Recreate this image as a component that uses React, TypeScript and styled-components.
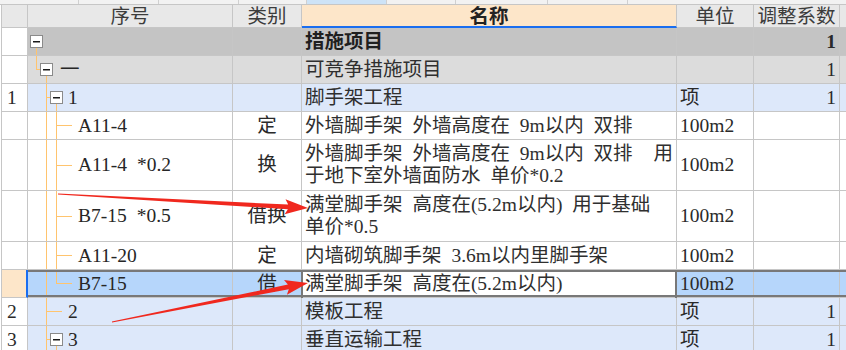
import React from 'react';
import styled, { createGlobalStyle, css } from 'styled-components';

const GRID = '#c6c6c6';
const ORANGE = '#ffc46e';
const BLUE = '#1a6ef0';
const COLS = '27px 205px 69px 375px 77px 86px 1fr';

type Tone = 'head' | 'root' | 'group' | 'sub' | 'item' | 'sel';
const toneBg: Record<Tone, string> = {
  head: '#e8e8e8',
  root: '#c4c4c4',
  group: '#dcdcdc',
  sub: '#dde8fa',
  item: '#ffffff',
  sel: '#b6d6fb',
};

const GlobalStyle = createGlobalStyle`
  html, body { margin: 0; padding: 0; background: #fff; overflow: hidden; }
  body {
    font-family: "Liberation Serif", "Noto Sans CJK SC", serif;
    font-size: 19.5px;
    word-spacing: 5px;
    color: #2a2a2a;
  }
`;

const Page = styled.div`
  position: relative;
  width: 846px;
  height: 350px;
  overflow: hidden;
  background: #fff;
`;

const TopStrip = styled.div`
  display: flex;
  height: 4px;
  border-bottom: 1px solid ${GRID};
  background: #f2f2f2;
`;

const StripSeg = styled.div<{ $w?: number; $active?: boolean }>`
  box-sizing: border-box;
  flex: ${(p) => (p.$w ? `0 0 ${p.$w}px` : '1 1 auto')};
  border-right: ${(p) => (p.$w ? '1px solid #d0d0d0' : 'none')};
  background: ${(p) => (p.$active ? '#cde3f7' : 'transparent')};
`;

const Grid = styled.div`
  margin-left: 1px;
`;

const Row = styled.div<{ $h: number; $tone: Tone; $selected?: boolean }>`
  position: relative;
  display: grid;
  grid-template-columns: ${COLS};
  height: ${(p) => p.$h}px;
  background: ${(p) => toneBg[p.$tone]};
  ${(p) =>
    p.$selected &&
    css`
      &::after {
        content: '';
        position: absolute;
        left: 27px;
        right: -20px;
        top: 0;
        bottom: 1px;
        border-top: 2px solid #787878;
        border-bottom: 2px solid #787878;
        pointer-events: none;
      }
    `}
`;

const Cell = styled.div`
  box-sizing: border-box;
  border-right: 1px solid ${GRID};
  border-bottom: 1px solid ${GRID};
  display: flex;
  align-items: center;
  min-width: 0;
  overflow: hidden;
  line-height: 22px;
  white-space: pre;
`;

const RowHead = styled(Cell)<{ $state: 'head' | 'plain' | 'sel' }>`
  border-left: 1px solid ${GRID};
  padding-left: 5px;
  background: ${(p) =>
    p.$state === 'head' ? '#e8e8e8' : p.$state === 'sel' ? '#fde6c9' : '#ffffff'};
  ${(p) =>
    p.$state === 'sel' &&
    css`
      border-right: 2px solid ${BLUE};
    `}
`;

const HeadCell = styled(Cell)<{ $accent?: boolean }>`
  justify-content: center;
  padding-top: 2px;
  color: #3c3c3c;
  ${(p) =>
    p.$accent &&
    css`
      background: #fde6c9;
      font-weight: 700;
      color: #222;
      border-bottom: 2px solid ${BLUE};
    `}
`;

const TreeCell = styled(Cell)`
  align-items: stretch;
`;

const TreeSvg = styled.svg`
  flex: none;
  display: block;
`;

const TreeLabel = styled.span`
  align-self: center;
  color: #262626;
`;

const TypeCell = styled(Cell)`
  justify-content: center;
`;

const NameCell = styled(Cell)<{ $bold?: boolean; $current?: boolean }>`
  position: relative;
  flex-direction: column;
  justify-content: center;
  align-items: stretch;
  padding: 0 3px;
  font-weight: ${(p) => (p.$bold ? 700 : 400)};
  color: ${(p) => (p.$bold ? '#1f1f1f' : '#2f2f2f')};
  ${(p) =>
    p.$current &&
    css`
      background: #ffffff;
      overflow: visible;
      &::after {
        content: '';
        position: absolute;
        top: 0;
        bottom: -1px;
        left: -1px;
        right: -1px;
        border-left: 2px solid #787878;
        border-right: 2px solid #787878;
        pointer-events: none;
      }
    `}
`;

const NameLine = styled.div`
  display: flex;
  justify-content: space-between;
`;

const UnitCell = styled(Cell)`
  padding-left: 3px;
`;

const CoefCell = styled(Cell)<{ $bold?: boolean }>`
  justify-content: flex-end;
  padding-right: 3px;
  font-weight: ${(p) => (p.$bold ? 700 : 400)};
`;

const FillCell = styled(Cell)`
  border-right: none;
`;

const Overlay = styled.svg`
  position: absolute;
  left: 0;
  top: 0;
  pointer-events: none;
`;

type TreeSpec = {
  width: number;
  guides?: number[];
  elbow?: { x: number; to: number; full?: boolean };
  box?: number;
  child?: boolean;
};

function TreeGuide({ spec, h }: { spec: TreeSpec; h: number }) {
  const ch = h - 1;
  const mid = Math.floor(ch / 2);
  return (
    <TreeSvg width={spec.width} height={ch} shapeRendering="crispEdges">
      {(spec.guides || []).map((g) => (
        <line key={g} x1={g + 0.5} y1={0} x2={g + 0.5} y2={ch} stroke={ORANGE} />
      ))}
      {spec.elbow && (
        <>
          <line
            x1={spec.elbow.x + 0.5}
            y1={0}
            x2={spec.elbow.x + 0.5}
            y2={spec.elbow.full ? ch : mid + 1}
            stroke={ORANGE}
          />
          <line
            x1={spec.elbow.x}
            y1={mid + 0.5}
            x2={spec.elbow.to}
            y2={mid + 0.5}
            stroke={ORANGE}
          />
        </>
      )}
      {spec.box !== undefined && spec.child && (
        <line
          x1={spec.box + 6.5}
          y1={mid + 7}
          x2={spec.box + 6.5}
          y2={ch}
          stroke={ORANGE}
        />
      )}
      {spec.box !== undefined && (
        <>
          <rect
            x={spec.box + 0.5}
            y={mid - 6 + 0.5}
            width={12}
            height={12}
            fill="#fff"
            stroke="#8a8a8a"
          />
          <rect x={spec.box + 3} y={mid} width={7} height={1.5} fill="#1a1a1a" shapeRendering="auto" />
        </>
      )}
    </TreeSvg>
  );
}

type RowData = {
  h: number;
  tone: Tone;
  head: string;
  tree: TreeSpec;
  code: string;
  type?: string;
  name: string[][];
  bold?: boolean;
  unit?: string;
  coef?: string;
};

const itemTree: TreeSpec = { width: 50, guides: [18], elbow: { x: 28, to: 44, full: true } };

const rows: RowData[] = [
  { h: 28, tone: 'root', head: '', tree: { width: 20, box: 2, child: true }, code: '', name: [['措施项目']], bold: true, coef: '1' },
  { h: 28, tone: 'group', head: '', tree: { width: 32, elbow: { x: 8, to: 12 }, box: 12, child: true }, code: '一', name: [['可竞争措施项目']], coef: '1' },
  { h: 28, tone: 'sub', head: '1', tree: { width: 40, elbow: { x: 18, to: 22, full: true }, box: 22, child: true }, code: '1', name: [['脚手架工程']], unit: '项', coef: '1' },
  { h: 28, tone: 'item', head: '', tree: itemTree, code: 'A11-4', type: '定', name: [['外墙脚手架 外墙高度在 9m以内 双排']], unit: '100m2' },
  { h: 51, tone: 'item', head: '', tree: itemTree, code: 'A11-4 *0.2', type: '换', name: [['外墙脚手架 外墙高度在 9m以内 双排', '用'], ['于地下室外墙面防水 单价*0.2']], unit: '100m2' },
  { h: 51, tone: 'item', head: '', tree: itemTree, code: 'B7-15 *0.5', type: '借换', name: [['满堂脚手架 高度在(5.2m以内) 用于基础'], ['单价*0.5']], unit: '100m2' },
  { h: 28, tone: 'item', head: '', tree: itemTree, code: 'A11-20', type: '定', name: [['内墙砌筑脚手架 3.6m以内里脚手架']], unit: '100m2' },
  { h: 28, tone: 'sel', head: '', tree: { width: 50, guides: [18], elbow: { x: 28, to: 44 } }, code: 'B7-15', type: '借', name: [['满堂脚手架 高度在(5.2m以内)']], unit: '100m2' },
  { h: 28, tone: 'sub', head: '2', tree: { width: 40, elbow: { x: 18, to: 34, full: true } }, code: '2', name: [['模板工程']], unit: '项', coef: '1' },
  { h: 28, tone: 'sub', head: '3', tree: { width: 40, elbow: { x: 18, to: 22, full: true }, box: 22, child: true }, code: '3', name: [['垂直运输工程']], unit: '项', coef: '1' },
];

function arrowPoints(x1: number, y1: number, x2: number, y2: number) {
  const head = 23;
  const half = 7.5;
  const w0 = 0.4;
  const w1 = 2.3;
  const dx = x2 - x1;
  const dy = y2 - y1;
  const len = Math.hypot(dx, dy);
  const ux = dx / len;
  const uy = dy / len;
  const nx = -uy;
  const ny = ux;
  const bx = x2 - ux * head;
  const by = y2 - uy * head;
  const sx = bx + ux * 3;
  const sy = by + uy * 3;
  const pts = [
    [x1 + nx * w0, y1 + ny * w0],
    [sx + nx * w1, sy + ny * w1],
    [bx + nx * half, by + ny * half],
    [x2, y2],
    [bx - nx * half, by - ny * half],
    [sx - nx * w1, sy - ny * w1],
    [x1 - nx * w0, y1 - ny * w0],
  ];
  return pts.map((p) => `${p[0].toFixed(1)},${p[1].toFixed(1)}`).join(' ');
}

const strip: { w?: number; active?: boolean }[] = [
  { w: 79 }, { w: 80 }, { w: 80 }, { w: 68 }, { w: 80, active: true }, { w: 69 }, { w: 92 }, { w: 80 }, {},
];

export default function App() {
  return (
    <Page>
      <GlobalStyle />
      <TopStrip>
        {strip.map((s, i) => (
          <StripSeg key={i} $w={s.w} $active={s.active} />
        ))}
      </TopStrip>
      <Grid>
        <Row $h={23} $tone="head">
          <RowHead $state="head" />
          <HeadCell>序号</HeadCell>
          <HeadCell>类别</HeadCell>
          <HeadCell $accent>名称</HeadCell>
          <HeadCell>单位</HeadCell>
          <HeadCell>调整系数</HeadCell>
          <FillCell />
        </Row>
        {rows.map((r, i) => {
          const sel = r.tone === 'sel';
          return (
            <Row key={i} $h={r.h} $tone={r.tone} $selected={sel}>
              <RowHead $state={sel ? 'sel' : 'plain'}>{r.head}</RowHead>
              <TreeCell>
                <TreeGuide spec={r.tree} h={r.h} />
                <TreeLabel>{r.code}</TreeLabel>
              </TreeCell>
              <TypeCell>{r.type}</TypeCell>
              <NameCell $bold={r.bold} $current={sel}>
                {r.name.map((line, j) => (
                  <NameLine key={j}>
                    {line.map((seg, k) => (
                      <span key={k}>{seg}</span>
                    ))}
                  </NameLine>
                ))}
              </NameCell>
              <UnitCell>{r.unit}</UnitCell>
              <CoefCell $bold={r.bold}>{r.coef}</CoefCell>
              <FillCell />
            </Row>
          );
        })}
      </Grid>
      <Overlay width={846} height={350}>
        <polygon points={arrowPoints(58, 194, 308, 208)} fill="#f0281e" />
        <polygon points={arrowPoints(112, 322, 308, 283)} fill="#f0281e" />
      </Overlay>
    </Page>
  );
}
